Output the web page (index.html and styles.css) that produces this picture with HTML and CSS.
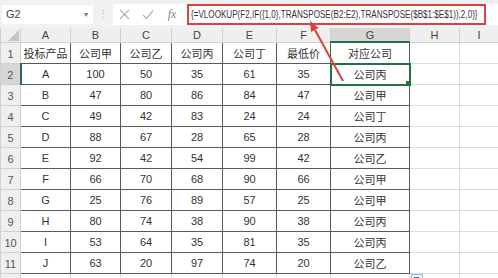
FILE: index.html
```html
<!DOCTYPE html>
<html lang="zh-CN">
<head>
    <meta charset="UTF-8">
    <meta name="viewport" content="width=device-width, initial-scale=1.0">
    <title>VLOOKUP 反向查找</title>
    <link rel="stylesheet" href="styles.css">
</head>
<body>
    <div class="toolbar">
        <div class="namebox">G2<span class="caret">&#9662;</span></div>
        <div class="dots">&#8942;</div>
        <div class="formula">
            <span class="fbtn">
                <svg width="11" height="11" viewBox="0 0 11 11"><path d="M1 1L10 10M10 1L1 10" stroke="#b5b5b5" stroke-width="1.2" fill="none"/></svg>
            </span>
            <span class="fbtn">
                <svg width="12" height="11" viewBox="0 0 12 11"><path d="M1 6L4.5 9.5L11 1.5" stroke="#b5b5b5" stroke-width="1.2" fill="none"/></svg>
            </span>
            <span class="fx">f<i>x</i></span>
            <div class="ftext"><span>{=VLOOKUP(F2,IF({1,0},TRANSPOSE(B2:E2),TRANSPOSE($B$1:$E$1)),2,0)}</span></div>
        </div>
    </div>

    <table class="sheet">
        <colgroup>
            <col class="c-rh"><col class="c-50"><col class="c-50"><col class="c-51"><col class="c-51">
            <col class="c-54"><col class="c-54"><col class="c-79"><col class="c-50"><col class="c-rest">
        </colgroup>
        <thead>
            <tr class="colhead">
                <th class="corner"><span class="tri"></span></th>
                <th>A</th><th>B</th><th>C</th><th>D</th><th>E</th><th>F</th>
                <th class="sel-col">G</th><th>H</th><th>I</th>
            </tr>
        </thead>
        <tbody>
            <tr><th>1</th><td class="d">投标产品</td><td class="d">公司甲</td><td class="d">公司乙</td><td class="d">公司丙</td><td class="d">公司丁</td><td class="d">最低价</td><td class="d">对应公司</td><td></td><td></td></tr>
            <tr><th class="sel-row">2</th><td class="d">A</td><td class="d">100</td><td class="d">50</td><td class="d">35</td><td class="d">61</td><td class="d">35</td><td class="d active">公司丙</td><td></td><td></td></tr>
            <tr><th>3</th><td class="d">B</td><td class="d">47</td><td class="d">80</td><td class="d">86</td><td class="d">84</td><td class="d">47</td><td class="d">公司甲</td><td></td><td></td></tr>
            <tr><th>4</th><td class="d">C</td><td class="d">49</td><td class="d">42</td><td class="d">83</td><td class="d">24</td><td class="d">24</td><td class="d">公司丁</td><td></td><td></td></tr>
            <tr><th>5</th><td class="d">D</td><td class="d">88</td><td class="d">67</td><td class="d">28</td><td class="d">65</td><td class="d">28</td><td class="d">公司丙</td><td></td><td></td></tr>
            <tr><th>6</th><td class="d">E</td><td class="d">92</td><td class="d">42</td><td class="d">54</td><td class="d">99</td><td class="d">42</td><td class="d">公司乙</td><td></td><td></td></tr>
            <tr><th>7</th><td class="d">F</td><td class="d">66</td><td class="d">70</td><td class="d">68</td><td class="d">90</td><td class="d">66</td><td class="d">公司甲</td><td></td><td></td></tr>
            <tr><th>8</th><td class="d">G</td><td class="d">25</td><td class="d">76</td><td class="d">89</td><td class="d">57</td><td class="d">25</td><td class="d">公司甲</td><td></td><td></td></tr>
            <tr><th>9</th><td class="d">H</td><td class="d">80</td><td class="d">74</td><td class="d">38</td><td class="d">90</td><td class="d">38</td><td class="d">公司丙</td><td></td><td></td></tr>
            <tr><th>10</th><td class="d">I</td><td class="d">53</td><td class="d">64</td><td class="d">35</td><td class="d">81</td><td class="d">35</td><td class="d">公司丙</td><td></td><td></td></tr>
            <tr><th>11</th><td class="d">J</td><td class="d">63</td><td class="d">20</td><td class="d">97</td><td class="d">74</td><td class="d">20</td><td class="d">公司乙</td><td></td><td></td></tr>
            <tr><th>12</th><td></td><td></td><td></td><td></td><td></td><td></td><td></td><td></td><td></td></tr>
        </tbody>
    </table>

    <!-- annotation arrow pointing at the formula -->
    <svg class="arrow" width="498" height="278" viewBox="0 0 498 278">
        <line x1="343" y1="81" x2="315" y2="30" stroke="#d6453d" stroke-width="2"/>
        <polygon points="310,21 318.5,28 311,32" fill="#d6453d"/>
    </svg>

    <div class="paste-opt"><span></span></div>
</body>
</html>
```

FILE: styles.css
```css
body {
    margin: 0;
    width: 498px;
    height: 278px;
    overflow: hidden;
    position: relative;
    background: #fff;
    font-family: "Liberation Sans", "Noto Sans CJK SC", sans-serif;
    font-size: 11px;
    color: #333;
}

/* formula bar */
.toolbar {
    display: flex;
    align-items: center;
    height: 28px;
    background: #f1f1f1;
}

.namebox {
    display: flex;
    align-items: center;
    justify-content: space-between;
    width: 91px;
    height: 19px;
    margin-left: 2px;
    padding: 0 5px 0 4px;
    box-sizing: border-box;
    background: #fff;
    color: #444;
}

.caret {
    color: #777;
    font-size: 8px;
}

.dots {
    width: 20px;
    text-align: center;
    color: #b0b0b0;
    font-size: 11px;
}

.formula {
    flex: 1;
    display: flex;
    align-items: center;
    height: 21px;
    background: #fff;
}

.fbtn {
    display: flex;
    justify-content: center;
    width: 24px;
}

.fbtn:first-child {
    margin-left: -1px;
}

.fx {
    width: 24px;
    text-align: center;
    font-family: "Liberation Serif", serif;
    font-style: italic;
    font-size: 12px;
    color: #888;
}

.ftext {
    height: 21px;
    width: 299px;
    margin-left: 3px;
    box-sizing: border-box;
    border: 2px solid #d6453d;
    padding-left: 2px;
    line-height: 17px;
    font-size: 10px;
    color: #333;
    white-space: nowrap;
    overflow: hidden;
}

/* narrow the formula the way the sheet's condensed UI font does */
.ftext span {
    display: inline-block;
    transform: scaleX(0.81);
    transform-origin: left center;
}

/* grid */
.sheet {
    border-collapse: collapse;
    table-layout: fixed;
    width: 498px;
}

.c-rh { width: 20px; }
.c-50 { width: 50px; }
.c-51 { width: 51px; }
.c-54 { width: 54px; }
.c-79 { width: 79px; }
.c-rest { width: 39px; }

.sheet th,
.sheet td {
    padding: 0;
    text-align: center;
    white-space: nowrap;
    overflow: hidden;
}

.sheet td {
    height: 20px;
    border: 1px solid #dcdcdc;
}

.sheet td.d {
    border: 1px solid #5a5a5a;
    color: #333;
}

.sheet tbody th {
    height: 20px;
    background: #efefef;
    border: 1px solid #d0d0d0;
    font-weight: normal;
    color: #555;
    vertical-align: bottom;
    line-height: 18px;
}

.colhead th {
    height: 13px;
    background: #efefef;
    border: 1px solid #d0d0d0;
    border-top: 0;
    font-weight: normal;
    color: #444;
    line-height: 12px;
}

.colhead th.sel-col {
    background: #d6d6d6;
    border-bottom: 2px solid #217346;
}

.sheet tbody th.sel-row {
    background: #d6d6d6;
    border-right: 2px solid #217346;
}

.corner {
    position: relative;
}

.tri {
    position: absolute;
    right: 1px;
    bottom: 1px;
    width: 0;
    height: 0;
    border-left: 11px solid transparent;
    border-bottom: 11px solid #c4c4c4;
}

td.active {
    position: relative;
    outline: 2px solid #217346;
    outline-offset: -1px;
}

td.active::after {
    content: "";
    position: absolute;
    right: -3px;
    bottom: -3px;
    width: 5px;
    height: 5px;
    background: #217346;
    border: 1px solid #fff;
}

/* overlays */
.arrow {
    position: absolute;
    left: 0;
    top: 0;
    pointer-events: none;
}

.paste-opt {
    position: absolute;
    left: 411px;
    top: 274px;
    width: 10px;
    height: 9px;
    background: #f4f7fb;
    border: 1px solid #9fb3cf;
}

.paste-opt span {
    display: block;
    width: 5px;
    height: 5px;
    margin: 2px 0 0 2px;
    background: #3a66b0;
}
```
